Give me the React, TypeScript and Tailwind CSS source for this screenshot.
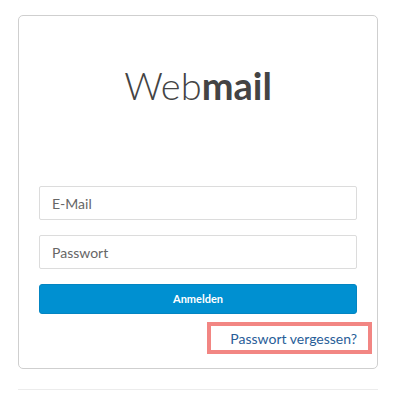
import React from 'react';

const font = { fontFamily: 'Lato, "Open Sans", sans-serif' };

export default function App() {
    return (
        <div className="min-h-[404px] bg-white" style={font}>
            <div className="ml-[18px] w-[360px] pt-[15px]">
                {/* card */}
                <div className="rounded-[5px] border border-[#cfcfcf] px-[20px] pb-[19px]">
                    <h1 className="pt-[50px] text-center text-[38px] leading-[38px] text-[#444]">
                        <span className="font-light">Web</span>
                        <span className="font-bold">mail</span>
                    </h1>

                    <form className="mt-[82px] flex flex-col gap-[15px]">
                        <input
                            type="text"
                            placeholder="E-Mail"
                            className="h-[34px] w-full rounded-[2px] border border-[#dcdcdc] px-[12px] text-[14px] text-[#555] placeholder:text-[#666] outline-none"
                        />
                        <input
                            type="password"
                            placeholder="Passwort"
                            className="h-[34px] w-full rounded-[2px] border border-[#dcdcdc] px-[12px] text-[14px] text-[#555] placeholder:text-[#666] outline-none"
                        />
                        <button
                            type="button"
                            className="h-[30px] w-full rounded-[3px] border border-[#0385c2] bg-[#0090d1] text-[11px] font-bold text-white"
                        >
                            Anmelden
                        </button>
                    </form>

                    <div className="mt-[15px] flex justify-end">
                        <div className="relative">
                            <a href="#" className="block text-[14px] leading-[20px] text-[#285d98]">
                                Passwort vergessen?
                            </a>
                            {/* highlight box */}
                            <div className="pointer-events-none absolute top-[-7px] bottom-[-5px] left-[-23px] right-[-15px] border-4 border-[#f28683]" />
                        </div>
                    </div>
                </div>

                <div className="mt-[20px] h-px bg-[#ececec]" />
            </div>
        </div>
    );
}
